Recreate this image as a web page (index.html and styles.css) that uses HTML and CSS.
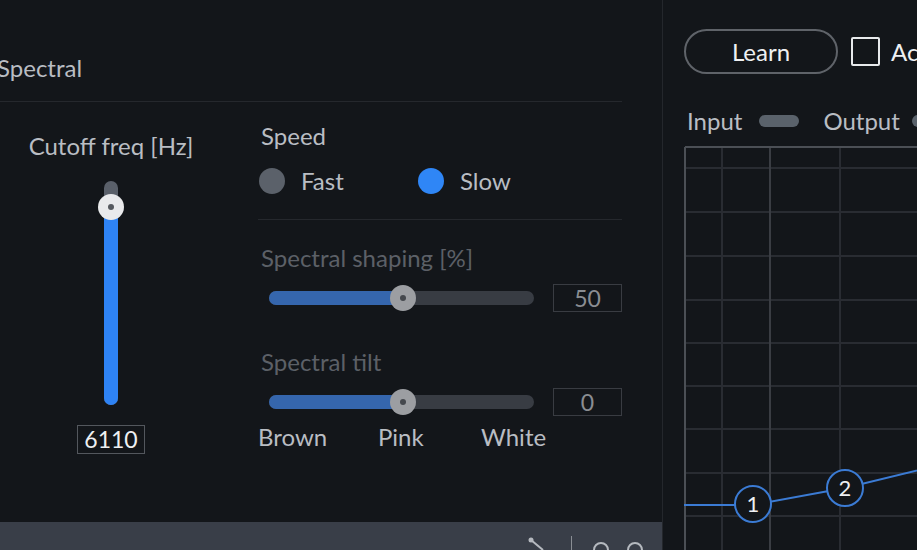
FILE: index.html
```html
<!DOCTYPE html>
<html>
	<head>
		<meta charset="utf-8">
		<title>Spectral</title>
		<link rel="stylesheet" href="styles.css">
	</head>
	<body>
		<div class="app">
			<div class="left">
				<div class="panel-head">
					<span class="title">Spectral</span>
				</div>
				<div class="panel-body">
					<div class="cutoff">
						<div class="label">Cutoff freq [Hz]</div>
						<div class="vslider">
							<div class="vfill"></div>
							<div class="vthumb"><span></span></div>
						</div>
						<div class="valbox">6110</div>
					</div>
					<div class="settings">
						<div class="label">Speed</div>
						<div class="radios">
							<div class="option"><span class="radio"></span>Fast</div>
							<div class="option"><span class="radio on"></span>Slow</div>
						</div>
						<div class="sep"></div>
						<div class="label dim">Spectral shaping [%]</div>
						<div class="hrow">
							<div class="hslider">
								<div class="hfill"></div>
								<div class="hthumb"><span></span></div>
							</div>
							<div class="valbox dim">50</div>
						</div>
						<div class="label dim gap">Spectral tilt</div>
						<div class="hrow">
							<div class="hslider">
								<div class="hfill"></div>
								<div class="hthumb"><span></span></div>
							</div>
							<div class="valbox dim">0</div>
						</div>
						<div class="ticks">
							<span class="t1">Brown</span>
							<span class="t2">Pink</span>
							<span>White</span>
						</div>
					</div>
				</div>
				<div class="bottom-bar">
					<svg class="probe" width="30" height="14" viewBox="0 0 30 14">
						<circle cx="4" cy="4" r="2.5" fill="#b5b9bf"/>
						<line x1="4" y1="4" x2="16" y2="14" stroke="#b5b9bf" stroke-width="2"/>
					</svg>
					<div class="divider"></div>
					<svg class="knobs" width="60" height="14" viewBox="0 0 60 14">
						<circle cx="8" cy="14" r="7" fill="none" stroke="#b5b9bf" stroke-width="2"/>
						<circle cx="42" cy="14" r="7" fill="none" stroke="#b5b9bf" stroke-width="2"/>
					</svg>
				</div>
			</div>
			<div class="right">
				<div class="toolbar">
					<button class="learn">Learn</button>
					<span class="check"></span>
					<span class="check-label">Active</span>
				</div>
				<div class="meters">
					<span>Input</span>
					<span class="meter"></span>
					<span class="out">Output</span>
					<span class="meter near"></span>
				</div>
				<div class="graph">
					<svg width="260" height="420" viewBox="0 0 260 420">
						<g stroke="#292c32" stroke-width="2">
							<line x1="38" y1="0" x2="38" y2="420"/>
							<line x1="156" y1="0" x2="156" y2="420"/>
							<line x1="0" y1="22" x2="260" y2="22"/>
							<line x1="0" y1="66" x2="260" y2="66"/>
							<line x1="0" y1="110" x2="260" y2="110"/>
							<line x1="0" y1="154" x2="260" y2="154"/>
							<line x1="0" y1="197" x2="260" y2="197"/>
							<line x1="0" y1="240" x2="260" y2="240"/>
							<line x1="0" y1="283" x2="260" y2="283"/>
							<line x1="0" y1="327" x2="260" y2="327"/>
							<line x1="0" y1="370" x2="260" y2="370"/>
						</g>
						<line x1="86" y1="0" x2="86" y2="420" stroke="#3a3d43" stroke-width="2"/>
						<path d="M1 1 H260 M1 1 V420" stroke="#4b4f55" stroke-width="2" fill="none"/>
						<polyline points="0,359 69,359 161,342 260,318" fill="none" stroke="#3b7bd4" stroke-width="2"/>
						<g fill="#13161a" stroke="#3b7bd4" stroke-width="2">
							<circle cx="69" cy="358" r="18"/>
							<circle cx="161" cy="342" r="18"/>
						</g>
						<g fill="#eef0f2" font-family="Lato, sans-serif" font-size="22" text-anchor="middle">
							<text x="69" y="366">1</text>
							<text x="161" y="350">2</text>
						</g>
					</svg>
				</div>
			</div>
		</div>
	</body>
</html>
```

FILE: styles.css
```css
* {
	margin: 0;
	padding: 0;
	box-sizing: border-box;
}

body {
	width: 917px;
	height: 550px;
	overflow: hidden;
	background-color: #13161a;
	font-family: Lato, "Noto Sans", sans-serif;
	font-size: 24px;
	line-height: 28px;
	color: #b9bdc3;
}

.app {
	display: flex;
	height: 550px;
}

/* left panel */
.left {
	width: 663px;
	flex-shrink: 0;
	display: flex;
	flex-direction: column;
	border-right: 1px solid #24272c;
}

.panel-head {
	width: 622px;
	height: 102px;
	display: flex;
	align-items: flex-end;
	padding-bottom: 19px;
	border-bottom: 1px solid #25282d;
}

.title {
	margin-left: -3px;
}

.panel-body {
	display: flex;
	flex: 1;
}

.label.dim {
	color: #5c6067;
}

.cutoff {
	width: 222px;
	display: flex;
	flex-direction: column;
	align-items: center;
	padding-top: 30px;
	margin-right: 36px;
}

.vslider {
	position: relative;
	width: 14px;
	height: 224px;
	margin-top: 21px;
	border-radius: 7px;
	background-color: #5a606a;
}

.vfill {
	position: absolute;
	left: 0;
	right: 0;
	top: 26px;
	bottom: 0;
	border-radius: 0 0 7px 7px;
	background-color: #2e83f5;
}

.vthumb {
	position: absolute;
	left: -6px;
	top: 13px;
	width: 26px;
	height: 26px;
	border-radius: 50%;
	background-color: #e9eaec;
	display: flex;
	align-items: center;
	justify-content: center;
}

.vthumb span,
.hthumb span {
	width: 6px;
	height: 6px;
	border-radius: 50%;
	background-color: #55595f;
}

.valbox {
	width: 68px;
	height: 29px;
	margin-top: 20px;
	border: 1px solid #53575d;
	text-align: center;
	font-size: 23px;
	line-height: 27px;
	color: #eef0f2;
}

.valbox.dim {
	width: 69px;
	height: 28px;
	margin-top: 0;
	border-color: #393c42;
	line-height: 26px;
	color: #8a8d92;
}

.settings {
	width: 364px;
	padding-top: 20px;
}

.settings > .label {
	padding-left: 3px;
}

.radios {
	display: flex;
	margin-top: 17px;
}

.option {
	display: flex;
	align-items: center;
	width: 159px;
	padding-left: 1px;
	gap: 16px;
}

.radio {
	width: 26px;
	height: 26px;
	border-radius: 50%;
	background-color: #5b616a;
}

.radio.on {
	background-color: #2f86f6;
}

.sep {
	height: 1px;
	margin: 24px 0;
	background-color: #25282d;
}

.hrow {
	display: flex;
	align-items: center;
	margin-top: 12px;
	gap: 19px;
}

.label.gap {
	margin-top: 36px;
}

.hslider {
	position: relative;
	width: 265px;
	height: 14px;
	margin-left: 11px;
	border-radius: 7px;
	background-color: #383c43;
}

.hfill {
	position: absolute;
	left: 0;
	top: 0;
	bottom: 0;
	width: 134px;
	border-radius: 7px 0 0 7px;
	background-color: #3566ad;
}

.hthumb {
	position: absolute;
	left: 121px;
	top: -6px;
	width: 26px;
	height: 26px;
	border-radius: 50%;
	background-color: #9c9ea2;
	display: flex;
	align-items: center;
	justify-content: center;
}

.hthumb span {
	background-color: #45484d;
}

.ticks {
	display: flex;
	margin-top: 7px;
}

.ticks .t1 {
	width: 120px;
}

.ticks .t2 {
	width: 103px;
}

.bottom-bar {
	height: 28px;
	display: flex;
	align-items: flex-end;
	background-color: #393e48;
}

.probe {
	margin-left: 527px;
}

.divider {
	width: 1px;
	height: 14px;
	margin-left: 14px;
	background-color: #8a8e94;
}

.knobs {
	margin-left: 21px;
}

/* right panel */
.right {
	flex: 1;
	display: flex;
	flex-direction: column;
	padding-left: 21px;
	overflow: hidden;
}

.toolbar {
	display: flex;
	align-items: center;
	margin-top: 29px;
	height: 45px;
	white-space: nowrap;
}

.learn {
	width: 154px;
	height: 45px;
	border: 2px solid #5f6369;
	border-radius: 23px;
	background: none;
	font-family: inherit;
	font-size: 24px;
	color: #eef0f2;
	flex-shrink: 0;
}

.check {
	width: 29px;
	height: 29px;
	margin-left: 13px;
	border: 2px solid #e8eaec;
	border-radius: 2px;
	flex-shrink: 0;
}

.check-label {
	margin-left: 11px;
	color: #eef0f2;
}

.meters {
	display: flex;
	align-items: center;
	margin-top: 33px;
	padding-left: 3px;
	white-space: nowrap;
}

.meter {
	width: 40px;
	height: 12px;
	margin-left: 17px;
	border-radius: 6px;
	background-color: #5a626b;
	flex-shrink: 0;
}

.meter.near {
	margin-left: 12px;
}

.out {
	margin-left: 24px;
}

.graph {
	margin-top: 11px;
	height: 420px;
	overflow: hidden;
}

.graph svg {
	display: block;
}
```
